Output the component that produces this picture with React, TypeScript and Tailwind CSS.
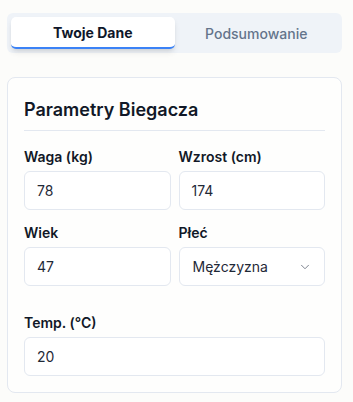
import { ChevronDown } from "lucide-react";

const font = { fontFamily: "Inter, 'Noto Sans', sans-serif" };

function Field({ label, value }: { label: string; value: string }) {
  return (
    <div className="flex flex-col">
      <label className="text-[14px] font-semibold leading-5 text-[#111827]">{label}</label>
      <div className="mt-1 flex h-[39px] items-center rounded-md border border-[#e3e8f0] bg-white px-3 text-[14px] text-[#1f2937]">
        {value}
      </div>
    </div>
  );
}

export default function App() {
  return (
    <div className="min-h-screen bg-[#fcfcfa] pl-[7px] pr-[11px] pt-[13px]" style={font}>
      <div className="flex h-10 items-stretch rounded-md bg-[#eff3f8] p-1">
        <button className="flex-1 rounded-[5px] border-b-2 border-[#3b82f6] bg-white text-[14px] font-bold text-[#0f172a] shadow-md">
          Twoje Dane
        </button>
        <button className="flex-1 text-[14px] font-medium text-[#64748b]">Podsumowanie</button>
      </div>

      <div className="mt-6 rounded-lg border border-[#e3e8f0] bg-white/60 px-4 pb-4 pt-[18px]">
        <h2 className="border-b border-[#e3e8f0] pb-[6px] text-[18px] font-semibold leading-7 text-[#111827]">
          Parametry Biegacza
        </h2>
        <div className="mt-4 grid grid-cols-2 gap-x-2 gap-y-[13px]">
          <Field label="Waga (kg)" value="78" />
          <Field label="Wzrost (cm)" value="174" />
          <Field label="Wiek" value="47" />
          <div className="flex flex-col">
            <label className="text-[14px] font-semibold leading-5 text-[#111827]">Płeć</label>
            <div className="mt-1 flex h-[39px] items-center justify-between rounded-md border border-[#e3e8f0] bg-white pl-[13px] pr-3 text-[14px] text-[#1f2937]">
              <span>Mężczyzna</span>
              <ChevronDown size={14} strokeWidth={1.5} className="text-[#6b7280]" />
            </div>
          </div>
        </div>
        <div className="mt-[27px]">
          <Field label="Temp. (°C)" value="20" />
        </div>
      </div>
    </div>
  );
}
